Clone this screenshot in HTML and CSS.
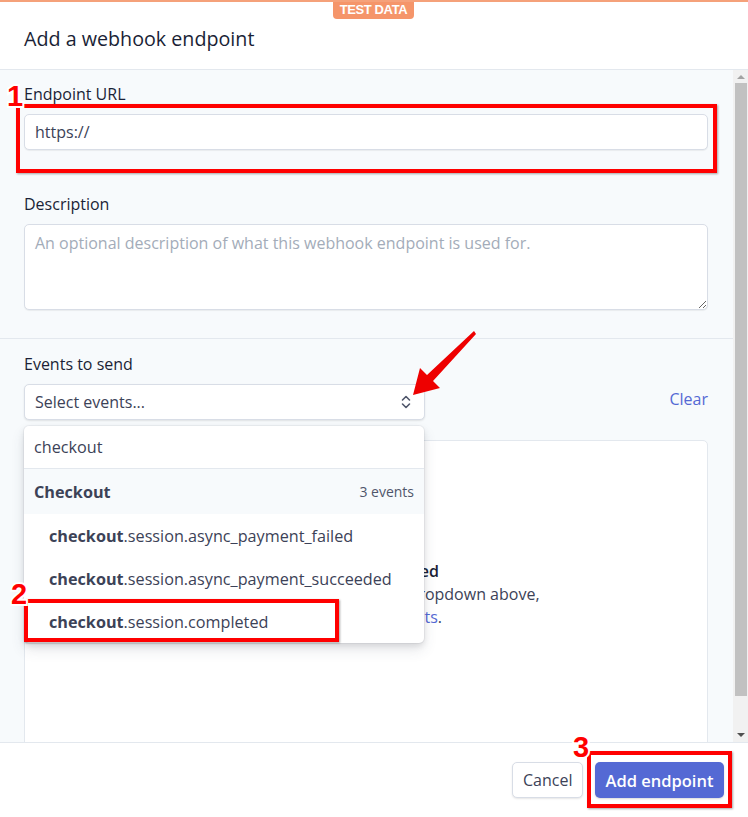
FILE: index.html
```html
<!DOCTYPE html>
<html lang="en">
<head>
  <meta charset="UTF-8" />
  <meta name="viewport" content="width=device-width, initial-scale=1.0" />
  <title>Add a webhook endpoint</title>
  <link rel="stylesheet" href="styles.css">
</head>
<body>
  <div class="modal">
    <div class="test-badge">TEST DATA</div>

    <header class="modal-header">
      <h1>Add a webhook endpoint</h1>
    </header>

    <div class="modal-body">
      <div class="scroll-content">
        <section class="section">
          <label class="field-label" for="url">Endpoint URL</label>
          <input class="text-input" id="url" type="text" value="https://" />

          <label class="field-label desc-label" for="desc">Description</label>
          <textarea class="text-area" id="desc" placeholder="An optional description of what this webhook endpoint is used for."></textarea>
        </section>

        <section class="section events">
          <div class="field-label">Events to send</div>
          <div class="select-row">
            <div class="select-box">
              <span>Select events...</span>
              <svg class="chevrons" width="12" height="16" viewBox="0 0 12 16">
                <path d="M2.5 6 L6 2.5 L9.5 6" fill="none" stroke="#4f566b" stroke-width="1.6" stroke-linecap="round" stroke-linejoin="round"/>
                <path d="M2.5 10 L6 13.5 L9.5 10" fill="none" stroke="#4f566b" stroke-width="1.6" stroke-linecap="round" stroke-linejoin="round"/>
              </svg>
            </div>
            <a class="clear-link" href="#">Clear</a>
          </div>

          <div class="selected-box">
            <div class="empty-title">No events selected</div>
            <div class="empty-text">Add events to send from the dropdown above,</div>
            <div class="empty-text">or <a href="#">receive all events</a>.</div>
          </div>

          <div class="dropdown">
            <div class="search-row">checkout</div>
            <div class="group-row">
              <span class="group-name">Checkout</span>
              <span class="group-count">3 events</span>
            </div>
            <div class="event-row"><b>checkout</b>.session.async_payment_failed</div>
            <div class="event-row"><b>checkout</b>.session.async_payment_succeeded</div>
            <div class="event-row"><b>checkout</b>.session.completed</div>
          </div>
        </section>
      </div>

      <div class="scrollbar">
        <div class="sb-arrow up"></div>
        <div class="sb-thumb"></div>
        <div class="sb-space"></div>
        <div class="sb-arrow down"></div>
      </div>
    </div>

    <footer class="modal-footer">
      <button class="btn btn-cancel">Cancel</button>
      <button class="btn btn-primary">Add endpoint</button>
    </footer>

    <!-- annotations drawn over the screenshot -->
    <div class="mark mark-1"></div>
    <div class="mark mark-2"></div>
    <div class="mark mark-3"></div>
    <span class="num num-1">1</span>
    <span class="num num-2">2</span>
    <span class="num num-3">3</span>
    <svg class="arrow" width="748" height="817" viewBox="0 0 748 817">
      <polygon points="413,393 420,366 427,373 474,329 476,332 433,379 440,386" fill="#ee0000"/>
    </svg>
  </div>
</body>
</html>
```

FILE: styles.css
```css
* {
  box-sizing: border-box;
}
body {
  margin: 0;
  font-family: "Open Sans", "Noto Sans", Arial, sans-serif;
  color: #1a1f36;
  background: #fff;
}
.modal {
  position: relative;
  width: 748px;
  height: 817px;
  display: flex;
  flex-direction: column;
  border-top: 2px solid #f5a17a;
  overflow: hidden;
}
.test-badge {
  position: absolute;
  top: -2px;
  left: 333px;
  width: 81px;
  height: 19px;
  background: #f5956a;
  color: #fff;
  font-family: "Liberation Sans", Arial, sans-serif;
  font-weight: 700;
  font-size: 13px;
  letter-spacing: -0.4px;
  line-height: 20px;
  text-align: center;
  border-radius: 0 0 4px 4px;
}
.modal-header {
  height: 68px;
  padding: 0 24px;
  display: flex;
  align-items: center;
  border-bottom: 1px solid #e3e8ee;
}
.modal-header h1 {
  margin: 6px 0 0;
  font-size: 19.7px;
  font-weight: 400;
  color: #1a1f36;
}
.modal-body {
  height: 672px;
  display: flex;
  background: #f7fafc;
}
.scroll-content {
  flex: 1;
  overflow: hidden;
}
.section {
  padding: 14px 24px 28px;
  border-bottom: 1px solid #e3e8ee;
}
.field-label {
  display: block;
  font-size: 16px;
  line-height: 20px;
  font-weight: 500;
  color: #1a1f36;
  margin-bottom: 10px;
}
.desc-label {
  margin-top: 44px;
}
.text-input,
.text-area {
  display: block;
  width: 684px;
  font-family: inherit;
  font-size: 16px;
  color: #3c4257;
  background: #fff;
  border: 1px solid #d8dde6;
  border-radius: 5px;
  box-shadow: 0 1px 1px rgba(0, 0, 0, 0.06);
  padding: 0 10px;
  outline: none;
}
.text-input {
  height: 36px;
}
.text-area {
  height: 86px;
  padding: 7px 10px;
  resize: vertical;
  line-height: 22px;
}
.text-area::placeholder {
  color: #a3acb9;
}
.events {
  position: relative;
  border-bottom: none;
  padding-top: 15px;
}
.select-row {
  display: flex;
  align-items: center;
  justify-content: space-between;
  width: 684px;
}
.select-box {
  width: 401px;
  height: 36px;
  display: flex;
  align-items: center;
  justify-content: space-between;
  padding: 0 12px 0 10px;
  background: #fff;
  border: 1px solid #d8dde6;
  border-radius: 5px;
  box-shadow: 0 1px 2px rgba(0, 0, 0, 0.1);
  font-size: 16px;
  color: #3c4257;
}
.chevrons {
  display: block;
}
.clear-link {
  color: #5469d4;
  font-weight: 500;
  font-size: 16px;
  text-decoration: none;
  margin-top: -6px;
}
.selected-box {
  margin-top: 20px;
  width: 684px;
  height: 320px;
  background: #fff;
  border: 1px solid #e3e8ee;
  border-radius: 5px;
  padding-top: 119px;
  text-align: center;
  font-size: 16px;
  line-height: 23px;
  color: #3c4257;
}
.empty-title {
  font-weight: 600;
  color: #1a1f36;
}
.empty-text a {
  color: #5469d4;
  font-weight: 500;
  text-decoration: none;
}
.dropdown {
  position: absolute;
  left: 24px;
  top: 87px;
  width: 400px;
  background: #fff;
  border-radius: 5px;
  box-shadow: 0 0 0 1px rgba(60, 66, 87, 0.06), 0 7px 14px rgba(60, 66, 87, 0.12), 0 3px 6px rgba(0, 0, 0, 0.1);
  font-size: 16.2px;
  color: #3c4257;
  overflow: hidden;
}
.search-row {
  height: 43px;
  padding: 0 10px;
  display: flex;
  align-items: center;
  border-bottom: 1px solid #e3e8ee;
}
.group-row {
  height: 45px;
  padding: 0 10px;
  display: flex;
  align-items: center;
  justify-content: space-between;
  background: #f7fafc;
}
.group-name {
  font-weight: 700;
  color: #3c4257;
}
.group-count {
  font-size: 14px;
  color: #4f566b;
}
.event-row {
  height: 43px;
  padding: 1px 25px 0;
  display: flex;
  align-items: center;
}
.event-row b {
  font-weight: 700;
}
.scrollbar {
  width: 15px;
  display: flex;
  flex-direction: column;
  align-items: center;
  background: #f1f1f1;
}
.sb-arrow {
  width: 0;
  height: 0;
  border-left: 4px solid transparent;
  border-right: 4px solid transparent;
}
.sb-arrow.up {
  margin: 5px 0 4px;
  border-bottom: 4px solid #a3a3a3;
}
.sb-arrow.down {
  margin: 4px 0 5px;
  border-top: 4px solid #505050;
}
.sb-thumb {
  width: 12px;
  height: 613px;
  background: #c1c1c1;
}
.sb-space {
  flex: 1;
}
.modal-footer {
  flex: 1;
  display: flex;
  justify-content: flex-end;
  align-items: flex-start;
  gap: 12px;
  padding: 19px 24px 0;
  border-top: 1px solid #e3e8ee;
}
.btn {
  height: 36px;
  padding: 0 10px;
  border-radius: 5px;
  font-family: inherit;
  font-size: 16px;
  cursor: pointer;
}
.btn-cancel {
  width: 71px;
  background: #fff;
  color: #3c4257;
  border: 1px solid #d8dde6;
  box-shadow: 0 1px 2px rgba(0, 0, 0, 0.1);
}
.btn-primary {
  width: 129px;
  background: #5469d4;
  color: #fff;
  font-weight: 600;
  font-size: 16.5px;
  border: none;
  box-shadow: 0 1px 2px rgba(0, 0, 0, 0.15);
}
.mark {
  position: absolute;
  border: 4px solid #ff0000;
  box-shadow: 1px 1px 2px rgba(0, 0, 0, 0.35);
}
.mark-1 {
  left: 16px;
  top: 102px;
  width: 701px;
  height: 69px;
}
.mark-2 {
  left: 24px;
  top: 597px;
  width: 315px;
  height: 43px;
}
.mark-3 {
  left: 587px;
  top: 749px;
  width: 145px;
  height: 57px;
}
.num {
  position: absolute;
  font-family: "Liberation Sans", Arial, sans-serif;
  font-weight: 700;
  font-size: 29px;
  line-height: 1;
  color: #ff0000;
  -webkit-text-stroke: 4px #fff;
  paint-order: stroke fill;
}
.num-1 {
  left: 7px;
  top: 80px;
}
.num-2 {
  left: 11px;
  top: 578px;
}
.num-3 {
  left: 573px;
  top: 731px;
}
.arrow {
  position: absolute;
  left: 0;
  top: 0;
  pointer-events: none;
}
```
